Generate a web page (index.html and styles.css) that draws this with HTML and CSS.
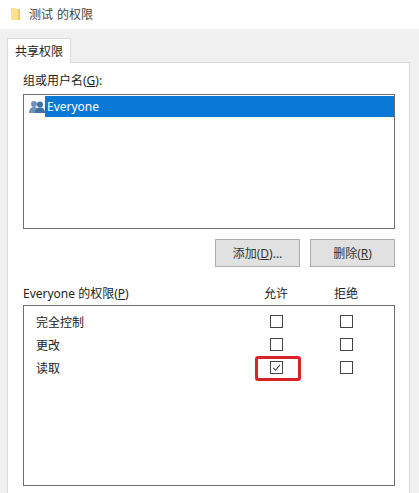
FILE: index.html
```html
<!DOCTYPE html>
<html lang="zh">
<head>
<meta charset="utf-8">
<title>测试 的权限</title>
<link rel="stylesheet" href="styles.css">
</head>
<body>
<div class="dialog">
  <header class="titlebar">
    <svg class="folder" viewBox="0 0 10 14" width="10" height="14"><path d="M0 1h4l1 1h4v11l-9 0z" fill="#fbe08e"/><path d="M7 2h2v11H7z" fill="#f1c95f"/></svg>
    <span class="titletext">测试 的权限</span>
  </header>
  <div class="body">
    <div class="tabs"><div class="tab">共享权限</div></div>
    <main class="panel">
      <div class="label">组或用户名(<u>G</u>):</div>
      <div class="listbox">
        <div class="listrow">
          <svg class="users" viewBox="0 0 16 14" width="16" height="14">
            <circle cx="5" cy="4" r="3" fill="#6f93b8"/><path d="M0 13c0-4 2-6 5-6s5 2 5 6z" fill="#6f93b8"/>
            <circle cx="11" cy="4.500" r="3" fill="#3f73a8"/><path d="M6 13c0-4 2-5.500 5-5.500s5 1.500 5 5.500z" fill="#3f73a8"/>
          </svg>
          <div class="selected">Everyone</div>
        </div>
      </div>
      <div class="buttons">
        <button class="btn">添加(<u>D</u>)...</button>
        <button class="btn">删除(<u>R</u>)</button>
      </div>
      <div class="permhead">
        <div class="permtitle">Everyone 的权限(<u>P</u>)</div>
        <div class="col">允许</div>
        <div class="col">拒绝</div>
      </div>
      <div class="permbox">
        <div class="permrow">
          <div class="permtitle">完全控制</div>
          <div class="col"><span class="check"></span></div>
          <div class="col"><span class="check"></span></div>
        </div>
        <div class="permrow">
          <div class="permtitle">更改</div>
          <div class="col"><span class="check"></span></div>
          <div class="col"><span class="check"></span></div>
        </div>
        <div class="permrow">
          <div class="permtitle">读取</div>
          <div class="col highlight">
            <span class="check">
              <svg viewBox="0 0 12 12" width="12" height="12"><path d="M2.500 6.500 5 9l4.800-6" fill="none" stroke="#333" stroke-width="1.100"/></svg>
            </span>
            <span class="redbox"></span>
          </div>
          <div class="col"><span class="check"></span></div>
        </div>
      </div>
    </main>
  </div>
</div>
</body>
</html>
```

FILE: styles.css
```css
* { box-sizing: border-box; }
html, body { margin: 0; height: 100%; }
body {
  font-family: "Noto Sans", "Noto Sans CJK SC", sans-serif;
  font-size: 12px;
  color: #222;
  background: #fff;
}
.dialog { height: 493px; display: flex; flex-direction: column; }
.titlebar {
  height: 29px;
  flex: none;
  display: flex;
  align-items: center;
  gap: 8px;
  padding: 0 0 2px 11px;
  color: #444;
  background: #fff;
}
.titletext { word-spacing: 1px; }
.folder { flex: none; }
.body {
  flex: 1;
  background: #f0f0f0;
  padding: 9px 9px 0 7px;
  display: flex;
  flex-direction: column;
  min-height: 0;
}
.tabs { height: 25px; flex: none; display: flex; }
.tab {
  width: 64px;
  height: 25px;
  background: #fff;
  border: 1px solid #dcdcdc;
  border-bottom: 0;
  display: flex;
  align-items: center;
  justify-content: center;
  position: relative;
  z-index: 1;
}
.panel {
  flex: 1;
  background: #fff;
  border: 1px solid #dcdcdc;
  border-bottom: 0;
  margin-top: -1px;
  padding: 8px 14px 0 15px;
  min-height: 0;
}
.label { height: 23px; line-height: 20px; }
.listbox {
  height: 135px;
  border: 1px solid #6e6e6e;
  padding: 1px 0 0 5px;
}
.listrow { display: flex; align-items: center; height: 21px; }
.users { flex: none; }
.selected {
  flex: 1;
  height: 21px;
  line-height: 21px;
  padding-left: 2px;
  background: #0a78d7;
  color: #fff;
}
.buttons {
  display: flex;
  justify-content: flex-end;
  gap: 10px;
  margin-top: 10px;
}
.btn {
  width: 85px;
  height: 28px;
  font: inherit;
  color: #333;
  background: #e1e1e1;
  border: 1px solid #adadad;
  padding: 0;
}
.permhead {
  display: flex;
  align-items: center;
  height: 22px;
  margin-top: 15px;
}
.permbox {
  height: 181px;
  margin-top: 1px;
  border: 1px solid #6e6e6e;
  padding: 4px 0 0 0;
}
.permrow {
  display: flex;
  align-items: center;
  height: 23px;
}
.permbox .permtitle { padding-left: 12px; flex: 0 0 217px; }
.permhead .permtitle { flex: 0 0 218px; }
.col {
  flex: 0 0 70px;
  display: flex;
  justify-content: center;
  align-items: center;
  position: relative;
}
.check {
  width: 13px;
  height: 13px;
  border: 1px solid #444;
  display: block;
  background: #fff;
}
.check svg { display: block; margin: 0; width: 11px; height: 11px; }
.redbox {
  position: absolute;
  left: 14px;
  top: -5px;
  width: 46px;
  height: 25px;
  border: 3px solid #d8232a;
  border-radius: 3px;
}
```
